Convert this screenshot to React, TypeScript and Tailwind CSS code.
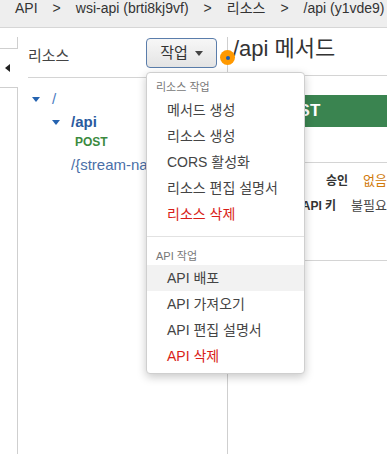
export default function App() {
  const resourceItems = [
    { label: "메서드 생성" },
    { label: "리소스 생성" },
    { label: "CORS 활성화" },
    { label: "리소스 편집 설명서" },
    { label: "리소스 삭제", danger: true },
  ];
  const apiItems = [
    { label: "API 배포", active: true },
    { label: "API 가져오기" },
    { label: "API 편집 설명서" },
    { label: "API 삭제", danger: true },
  ];

  return (
    <div className="relative w-[387px] h-[454px] overflow-hidden bg-white font-['Liberation_Sans','Noto_Sans_CJK_KR',sans-serif] text-[#333]">
      {/* Breadcrumb */}
      <div className="h-[28px] bg-[#eeeeee] border-b border-[#d6d6d6] flex items-start gap-[15px] pl-[15px] text-[14px] leading-[16px] text-[#333] whitespace-nowrap">
        <span>API</span>
        <span>&gt;</span>
        <span>wsi-api (brti8kj9vf)</span>
        <span>&gt;</span>
        <span>리소스</span>
        <span>&gt;</span>
        <span>/api (y1vde9)</span>
      </div>

      <div className="flex mt-[9px] h-[417px]">
        {/* Collapse tab */}
        <div className="w-[18px] flex flex-col shrink-0">
          <div className="h-[11px] border-r border-[#cfcfcf]" />
          <div className="h-[40px] border-t border-b border-[#cfcfcf] flex items-center pl-[5px]">
            <svg width="5" height="8" viewBox="0 0 5 8">
              <path d="M5 0 L0 4 L5 8 Z" fill="#222" />
            </svg>
          </div>
          <div className="flex-1 border-r border-[#cfcfcf]" />
        </div>

        {/* Resource tree */}
        <div className="w-[209px] shrink-0">
          <div className="mx-[10px] h-[41px] border-b border-[#d4d4d4] flex items-start justify-between">
            <span className="mt-[10px] text-[15px] leading-[18px] text-[#444]">리소스</span>
            <div className="relative mt-[1px]">
              <button className="w-[71px] h-[30px] rounded-[4px] border border-[#5a7dab] bg-gradient-to-b from-[#f7f7f7] to-[#e4e4e4] flex items-center justify-center gap-[7px] text-[15px] text-[#333]">
                <span>작업</span>
                <svg width="8" height="5" viewBox="0 0 8 5">
                  <path d="M0 0 L8 0 L4 5 Z" fill="#444" />
                </svg>
              </button>

              {/* Dropdown menu */}
              <div className="absolute left-0 top-[34px] w-[159px] bg-white border border-[#cfcfcf] rounded-[4px] shadow-[0_3px_10px_rgba(0,0,0,0.22)] pt-[7px] pb-[4px] z-10">
                <div className="pl-[9px] text-[11px] leading-[14px] text-[#777]">리소스 작업</div>
                <div className="mt-[3px]">
                  {resourceItems.map((item) => (
                    <div
                      key={item.label}
                      className={`h-[26px] pl-[20px] flex items-center text-[14px] whitespace-nowrap ${item.danger ? "text-[#d91e18]" : "text-[#444]"}`}
                    >
                      {item.label}
                    </div>
                  ))}
                </div>
                <div className="mt-[9px] border-t border-[#e2e2e2] pt-[12px]">
                  <div className="pl-[9px] text-[11px] leading-[14px] text-[#777]">API 작업</div>
                  <div className="mt-[2px]">
                    {apiItems.map((item) => (
                      <div
                        key={item.label}
                        className={`h-[26px] pl-[20px] flex items-center text-[14px] whitespace-nowrap ${item.active ? "bg-[#f2f2f2]" : ""} ${item.danger ? "text-[#d91e18]" : "text-[#444]"}`}
                      >
                        {item.label}
                      </div>
                    ))}
                  </div>
                </div>
              </div>
            </div>
          </div>

          <div className="mt-[10px] text-[15px] whitespace-nowrap">
            <div className="h-[22px] pl-[14px] flex items-center gap-[12px]">
              <svg width="8" height="5" viewBox="0 0 8 5">
                <path d="M0 0 L8 0 L4 5 Z" fill="#2563b0" />
              </svg>
              <span className="text-[#4a7bbf]">/</span>
            </div>
            <div className="h-[24px] pl-[34px] flex items-center gap-[11px]">
              <svg width="8" height="5" viewBox="0 0 8 5">
                <path d="M0 0 L8 0 L4 5 Z" fill="#2563b0" />
              </svg>
              <span className="font-bold text-[#2a5a9e]">/api</span>
            </div>
            <div className="h-[16px] pl-[57px] flex items-center text-[12px] font-bold text-[#3b8a3e]">POST</div>
            <div className="h-[30px] pl-[53px] flex items-center">
              <span className="w-[75px] overflow-hidden text-[#4a6fa8]">/{"{"}stream-name{"}"}</span>
            </div>
          </div>
        </div>

        {/* Method panel */}
        <div className="relative flex-1 border-l border-[#cfcfcf] min-w-0">
          <div className="h-[39px] border-b border-[#d4d4d4] pl-[5px] text-[22px] leading-[24px] text-[#333] whitespace-nowrap">
            /api 메서드
          </div>
          <div className="mt-[19px] ml-[9px] h-[32px] bg-[#3a8450] flex items-center pl-[37px] text-[17px] font-bold text-white">
            POST
          </div>
          <div className="h-[36px] border-b border-[#d4d4d4]" />
          <div className="mt-[6px] whitespace-nowrap">
            <div className="h-[24px] flex items-center gap-[15px]">
              <span className="w-[120px] text-right text-[12px] font-bold text-[#333]">승인</span>
              <span className="text-[13px] text-[#d17a0a]">없음</span>
            </div>
            <div className="mt-[1px] h-[24px] flex items-center gap-[15px]">
              <span className="w-[120px] text-right text-[12px] font-bold text-[#333]">API 키</span>
              <span className="text-[13px] text-[#444]">불필요</span>
            </div>
          </div>
          <div className="h-[43px] border-b border-[#d4d4d4]" />

          {/* Drag handle */}
          <div className="absolute left-[-8px] top-[13px] w-[15px] h-[15px] rounded-full bg-[#f90] flex items-center justify-center">
            <div className="w-[4px] h-[4px] rounded-full bg-[#1a5fb4]" />
          </div>
        </div>
      </div>
    </div>
  );
}
